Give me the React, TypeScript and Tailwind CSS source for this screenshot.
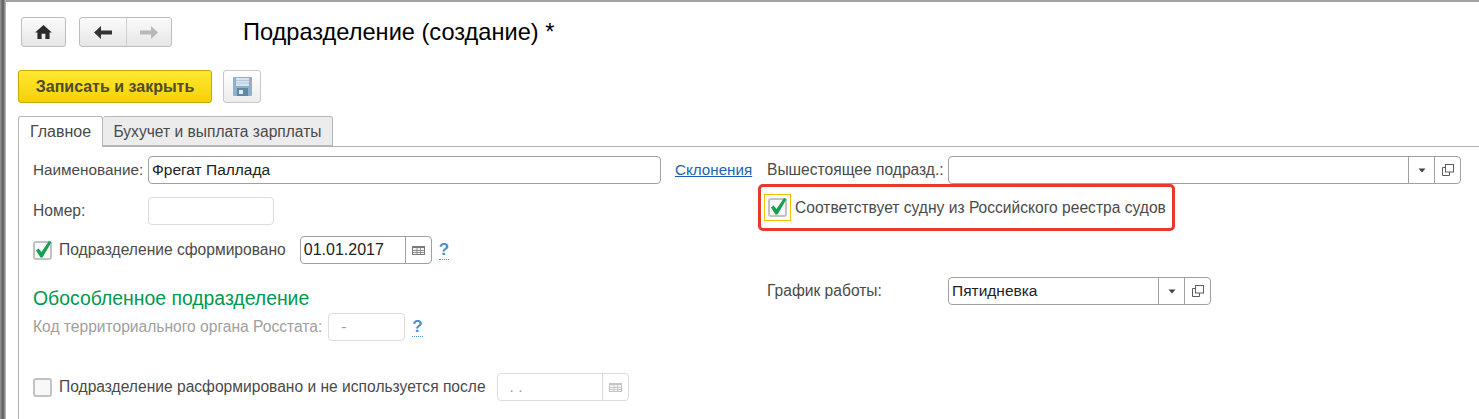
import { ReactNode } from "react";

function CheckMark() {
  return (
    <svg width="20" height="20" viewBox="0 0 20 20" className="absolute left-[-2px] top-[-2px] overflow-visible">
      <path d="M3 9.5 L5.5 7.5 L8.5 11 L16 0 L18.5 1 L9.5 16.5 L7.5 16.5 Z" fill="#14a04e" />
    </svg>
  );
}

function Checkbox({ checked }: { checked?: boolean }) {
  return (
    <span className="relative block h-[19px] w-[19px] shrink-0 rounded-[3px] border-2 border-[#c2c2c2] bg-[#f8f8f8]">
      {checked && <CheckMark />}
    </span>
  );
}

function CalendarIcon({ faded }: { faded?: boolean }) {
  const color = faded ? "#c4c4c4" : "#7a7a7a";
  return (
    <svg width="13" height="9" viewBox="0 0 13 9">
      <rect x="0" y="0" width="13" height="9" fill={color} />
      <rect x="1" y="2" width="11" height="6" fill="#f2f2f2" />
      <path d="M1 4.5H12M1 6.5H12M5 2V8M8.5 2V8" stroke={color} strokeWidth="0.8" />
    </svg>
  );
}

function OpenIcon() {
  return (
    <svg width="12" height="12" viewBox="0 0 12 12" fill="none" stroke="#5c5c5c">
      <rect x="3.5" y="0.5" width="8" height="7.5" fill="#ffffff" />
      <path d="M3.5 3.5H0.5V11.5H7.5V8" />
    </svg>
  );
}

function DropIcon() {
  return (
    <svg width="8" height="5" viewBox="0 0 8 5">
      <path d="M0.5 0.5H7.5L4 4.5Z" fill="#444444" />
    </svg>
  );
}

function Help() {
  return (
    <span className="border-b border-dotted border-[#4a90c8] text-[17px] font-bold leading-[17px] text-[#4a90c8]">?</span>
  );
}

function Field({
  w,
  faded,
  text,
  textClass = "pl-[3px] text-[15.5px]",
  children,
}: {
  w: string;
  faded?: boolean;
  text?: string;
  textClass?: string;
  children?: ReactNode;
}) {
  return (
    <div
      className={`flex h-[28px] shrink-0 rounded-[4px] border bg-white ${w} ${faded ? "border-[#dcdcdc]" : "border-[#a0a0a0]"}`}
    >
      <div className={`flex-1 truncate leading-[26px] ${textClass} ${faded ? "text-[#999999]" : "text-[#222222]"}`}>
        {text}
      </div>
      {children}
    </div>
  );
}

function FieldButton({ faded, children }: { faded?: boolean; children: ReactNode }) {
  return (
    <div
      className={`flex w-[26px] items-center justify-center border-l ${faded ? "border-[#dcdcdc]" : "border-[#a0a0a0]"}`}
    >
      {children}
    </div>
  );
}

export default function App() {
  return (
    <div className="flex h-[419px] w-[1479px] overflow-hidden bg-white font-['Liberation_Sans',Arial,sans-serif]">
      <div className="w-[6px] shrink-0 bg-gradient-to-r from-[#9a9a9a] via-[#5a5a5a] to-[#c4c4c4]" />

      <div className="flex-1 border-t-[2px] border-[#a3a3a3]">
        {/* Top bar */}
        <div className="mt-[15px] flex h-[30px] items-center pl-[15px]">
          <button className="flex h-[30px] w-[45px] items-center justify-center rounded-[3px] border border-[#bdbdbd] bg-gradient-to-b from-[#fbfbfb] to-[#e6e6e6]">
            <svg width="17" height="14" viewBox="0 0 18 15">
              <path d="M9 0 L18 8 H15.5 V15 H11 V9.5 H7 V15 H2.5 V8 H0 Z" fill="#2b2b2b" />
            </svg>
          </button>
          <div className="ml-[13px] flex h-[30px] w-[93px] rounded-[3px] border border-[#bdbdbd] bg-gradient-to-b from-[#fbfbfb] to-[#e6e6e6]">
            <div className="flex w-[47px] items-center justify-center border-r border-[#cfcfcf]">
              <svg width="18" height="13" viewBox="0 0 18 13">
                <path d="M7 0 V4.5 H18 V8.5 H7 V13 L0 6.5 Z" fill="#333333" />
              </svg>
            </div>
            <div className="flex flex-1 items-center justify-center">
              <svg width="18" height="13" viewBox="0 0 18 13">
                <path d="M11 0 V4.5 H0 V8.5 H11 V13 L18 6.5 Z" fill="#b8b8b8" />
              </svg>
            </div>
          </div>
          <div className="ml-[71px] text-[23.6px] leading-[30px] text-black">Подразделение (создание) *</div>
        </div>

        {/* Command bar */}
        <div className="mt-[23px] flex h-[33px] pl-[12px]">
          <button className="h-[33px] w-[194px] rounded-[3px] border border-[#c9a800] bg-gradient-to-b from-[#ffe92e] to-[#f5d000] text-[16px] font-bold text-[#4f4a2a]">
            Записать и закрыть
          </button>
          <button className="ml-[11px] flex h-[33px] w-[38px] items-center justify-center rounded-[3px] border border-[#c8c8c8] bg-gradient-to-b from-[#ffffff] to-[#ececec]">
            <svg width="19" height="19" viewBox="0 0 19 19">
              <rect width="19" height="19" rx="1" fill="#8fb0c8" />
              <rect x="3" y="1" width="13" height="8" fill="#d8e4ec" />
              <path d="M3 3.5H16M3 6H16" stroke="#b4cadb" />
              <rect x="4" y="11" width="11" height="8" fill="#5f87a6" />
              <rect x="6" y="13" width="4" height="4" fill="#e4edf3" />
            </svg>
          </button>
        </div>

        {/* Tabs */}
        <div className="ml-[12px] mt-[13px] flex h-[31px] items-end border-b border-[#b0b0b0]">
          <div className="relative top-[1px] h-[31px] w-[85px] rounded-t-[3px] border border-b-0 border-[#b8b8b8] bg-white text-center text-[16px] leading-[30px] text-[#4a4a4a]">
            Главное
          </div>
          <div className="h-[30px] w-[230px] rounded-t-[3px] border border-l-0 border-[#b8b8b8] bg-[#ececec] text-center text-[15.6px] leading-[29px] text-[#4a4a4a]">
            Бухучет и выплата зарплаты
          </div>
        </div>

        {/* Form */}
        <div className="ml-[12px] flex h-[272px] border-l border-[#b0b0b0] pl-[14px] pt-[9px] text-[15.6px] text-[#4a4a4a]">
          <div className="w-[734px] shrink-0">
            <div className="flex h-[28px] items-center">
              <span className="w-[115px] whitespace-nowrap text-[15.3px]">Наименование:</span>
              <Field w="w-[513px]" text="Фрегат Паллада" />
              <a className="ml-[14px] text-[15.2px] text-[#1f5fb4] underline">Склонения</a>
            </div>
            <div className="mt-[13px] flex h-[28px] items-center">
              <span className="w-[115px]">Номер:</span>
              <Field w="w-[126px]" faded />
            </div>
            <div className="mt-[11px] flex h-[28px] items-center">
              <Checkbox checked />
              <span className="ml-[7px] whitespace-nowrap">Подразделение сформировано</span>
              <div className="ml-[14px]">
                <Field w="w-[132px]" text="01.01.2017" textClass="pl-[3px] text-[16px]">
                  <FieldButton>
                    <CalendarIcon />
                  </FieldButton>
                </Field>
              </div>
              <span className="ml-[7px]">
                <Help />
              </span>
            </div>
            <div className="mt-[22px] text-[19.4px] leading-[24px] text-[#00994d]">Обособленное подразделение</div>
            <div className="mt-[3px] flex h-[28px] items-center text-[#a0a0a0]">
              <span className="whitespace-nowrap">Код территориального органа Росстата:</span>
              <div className="ml-[6px]">
                <Field w="w-[77px]" faded text="-" textClass="pl-[12px] text-[15.5px]" />
              </div>
              <span className="ml-[7px]">
                <Help />
              </span>
            </div>
            <div className="mt-[32px] flex h-[28px] items-center">
              <Checkbox />
              <span className="ml-[7px] whitespace-nowrap">Подразделение расформировано и не используется после</span>
              <div className="ml-[11px]">
                <Field w="w-[132px]" faded text=". ." textClass="pl-[12px] text-[15.5px]">
                  <FieldButton faded>
                    <CalendarIcon faded />
                  </FieldButton>
                </Field>
              </div>
            </div>
          </div>

          <div className="flex-1">
            <div className="flex h-[28px] items-center">
              <span className="w-[181px] whitespace-nowrap">Вышестоящее подразд.:</span>
              <Field w="w-[513px]">
                <FieldButton>
                  <DropIcon />
                </FieldButton>
                <FieldButton>
                  <OpenIcon />
                </FieldButton>
              </Field>
            </div>
            <div className="-ml-[9px] flex h-[47px] w-[417px] items-start rounded-[5px] border-[3px] border-[#e53b2f] pl-[3px] pt-[7px]">
              <span className="flex h-[27px] w-[27px] items-center justify-center border border-[#f2c200]">
                <Checkbox checked />
              </span>
              <span className="ml-[4px] mt-[2px] whitespace-nowrap">Соответствует судну из Российского реестра судов</span>
            </div>
            <div className="mt-[46px] flex h-[28px] items-center">
              <span className="w-[181px]">График работы:</span>
              <Field w="w-[263px]" text="Пятидневка">
                <FieldButton>
                  <DropIcon />
                </FieldButton>
                <FieldButton>
                  <OpenIcon />
                </FieldButton>
              </Field>
            </div>
          </div>
        </div>
      </div>
    </div>
  );
}
